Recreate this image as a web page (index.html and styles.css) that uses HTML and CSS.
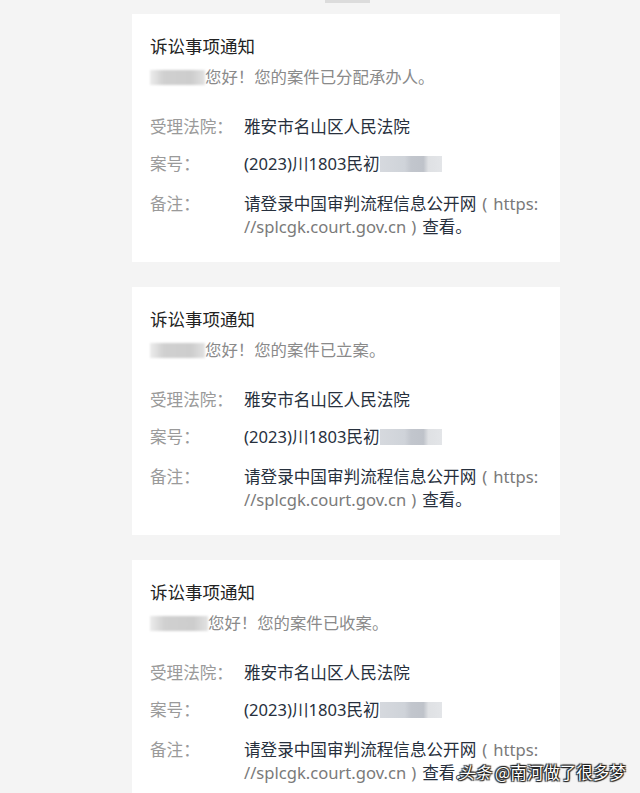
FILE: index.html
```html
<!DOCTYPE html>
<html lang="zh-CN">
<head>
<meta charset="utf-8">
<title>诉讼事项通知</title>
<link rel="stylesheet" href="styles.css">
</head>
<body>
<div class="page">
  <div class="topbar"></div>

  <div class="card">
    <div class="title">诉讼事项通知</div>
    <div class="greet"><span class="blur-name"></span>您好！您的案件已分配承办人。</div>
    <div class="rows">
      <div class="row r1"><span class="label">受理法院：</span><span class="value">雅安市名山区人民法院</span></div>
      <div class="row r2"><span class="label">案号：</span><span class="value">(2023)川1803民初<span class="blur-num"></span></span></div>
      <div class="row r3"><span class="label">备注：</span><span class="value">请登录中国审判流程信息公开网<span class="url"><span class="par-l">(</span>https:<br>//splcgk.court.gov.cn<span class="par-r">)</span></span>查看。</span></div>
    </div>
  </div>

  <div class="card">
    <div class="title">诉讼事项通知</div>
    <div class="greet"><span class="blur-name"></span>您好！您的案件已立案。</div>
    <div class="rows">
      <div class="row r1"><span class="label">受理法院：</span><span class="value">雅安市名山区人民法院</span></div>
      <div class="row r2"><span class="label">案号：</span><span class="value">(2023)川1803民初<span class="blur-num"></span></span></div>
      <div class="row r3"><span class="label">备注：</span><span class="value">请登录中国审判流程信息公开网<span class="url"><span class="par-l">(</span>https:<br>//splcgk.court.gov.cn<span class="par-r">)</span></span>查看。</span></div>
    </div>
  </div>

  <div class="card">
    <div class="title">诉讼事项通知</div>
    <div class="greet"><span class="blur-name wide"></span>您好！您的案件已收案。</div>
    <div class="rows">
      <div class="row r1"><span class="label">受理法院：</span><span class="value">雅安市名山区人民法院</span></div>
      <div class="row r2"><span class="label">案号：</span><span class="value">(2023)川1803民初<span class="blur-num"></span></span></div>
      <div class="row r3"><span class="label">备注：</span><span class="value">请登录中国审判流程信息公开网<span class="url"><span class="par-l">(</span>https:<br>//splcgk.court.gov.cn<span class="par-r">)</span></span>查看。</span></div>
    </div>
  </div>
</div>
<div class="watermark"><span class="wm-logo">头条</span> @南河做了很多梦</div>
</body>
</html>
```
FILE: styles.css
```css
html, body {
  margin: 0;
  padding: 0;
  background: #f4f4f4;
  height: 793px;
  overflow: hidden;
}
body {
  font-family: "Noto Sans", "Noto Sans CJK SC", sans-serif;
  position: relative;
}
.page {
  width: 428px;
  margin-left: 132px;
}
.topbar {
  width: 45px;
  height: 3px;
  margin-left: 193px;
  margin-bottom: 11px;
  background: #dcdcdc;
}
.card {
  background: #ffffff;
  padding: 20px 8px 24px 18px;
  margin-bottom: 25px;
}
.title {
  font-size: 17.5px;
  line-height: 24px;
  color: #222;
}
.greet {
  margin-top: 8px;
  font-size: 16.4px;
  line-height: 22px;
  color: #8a8a8a;
  display: flex;
  align-items: center;
}
.blur-name {
  display: inline-block;
  width: 55px;
  height: 15px;
  background: linear-gradient(90deg, #ececec 0%, #d0d0d0 25%, #cdcdcd 75%, #e2e2e2 100%);
  filter: blur(0.8px);
}
.blur-name.wide { width: 58px; }
.rows { margin-top: 27px; }
.row {
  display: flex;
  font-size: 16.6px;
  line-height: 23px;
}
.r2 { margin-top: 14px; }
.r3 { margin-top: 17px; }
.label {
  flex: 0 0 94px;
  color: #9a9a9a;
}
.value {
  color: #27303d;
  flex: 1;
}
.url { color: #7a7a7a; }
.par-l {
  margin: 0 6px 0 6px;
}
.par-r {
  margin: 0 6px 0 5px;
}
.blur-num {
  display: inline-block;
  width: 62px;
  height: 16px;
  vertical-align: -2px;
  background: linear-gradient(90deg, #d6d9de 0%, #cfd3d9 40%, #c2c6cd 50%, #bfc3ca 70%, #dfe1e4 78%, #e3e5e8 100%);
  filter: blur(0.6px);
}
.watermark {
  position: absolute;
  left: 458px;
  top: 760px;
  font-size: 16.5px;
  line-height: 24px;
  color: #fff;
  font-family: "Noto Sans CJK SC", sans-serif;
  text-shadow: 0 0 1px #000, 1px 1px 1px #222, -1px -1px 1px #222, 1px -1px 1px #222, -1px 1px 1px #222;
  white-space: nowrap;
}
.wm-logo {
  font-style: italic;
}
```
